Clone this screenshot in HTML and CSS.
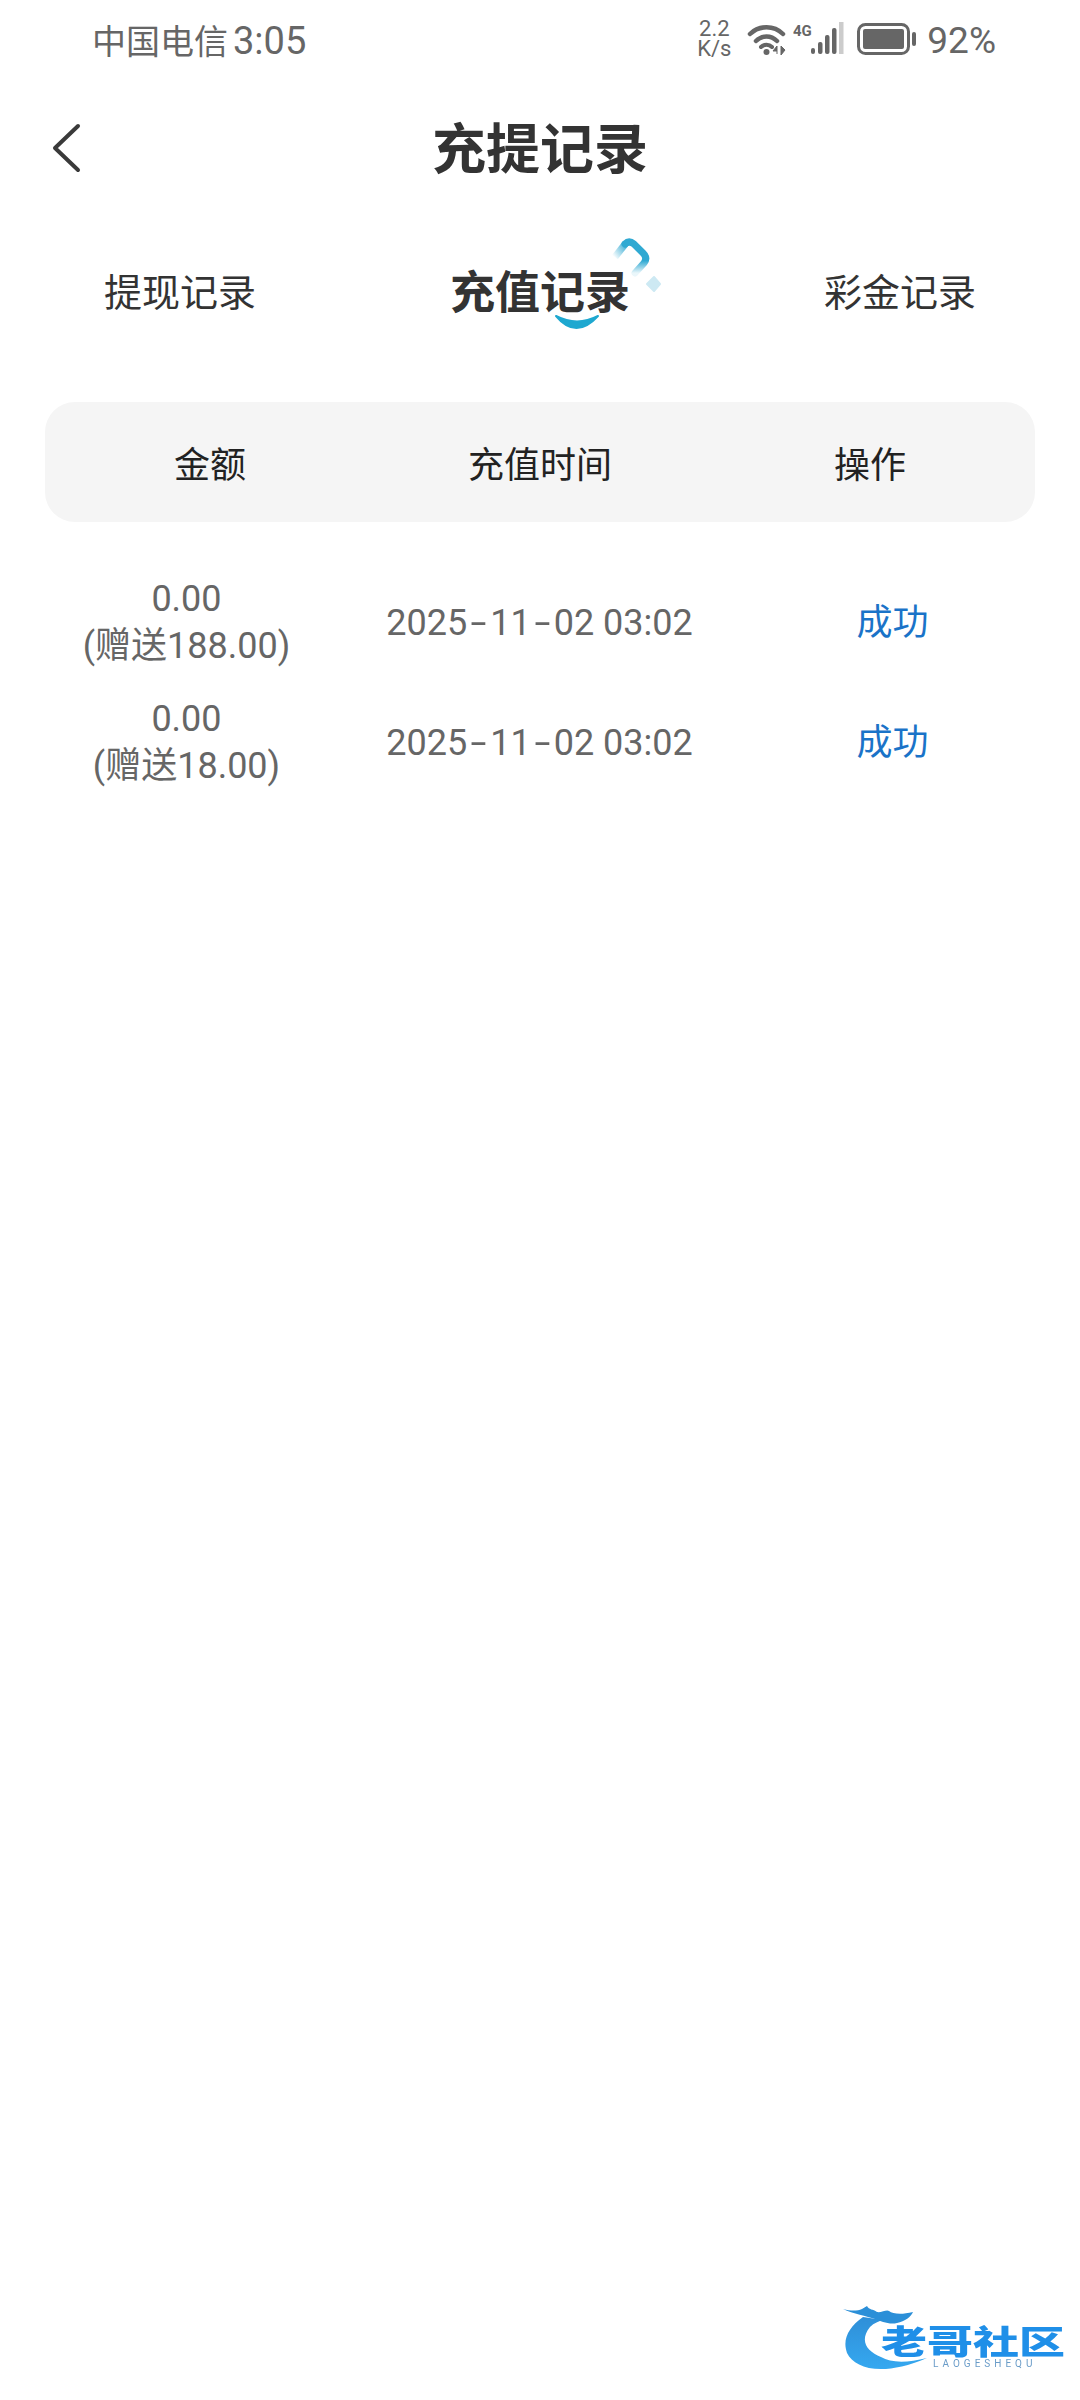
FILE: index.html
```html
<!DOCTYPE html>
<html>
    <head>
        <meta charset="utf-8" />
        <title>充提记录</title>
        <link rel="stylesheet" href="styles.css">
    </head>
    <body>
        <div class="page">
            <!--状态栏-->
            <div class="status_bar">
                <div class="status_left">中国电信<span class="status_time">3:05</span></div>
                <div class="status_right">
                    <div class="net_speed">2.2<br>K/s</div>
                    <svg class="ico_wifi" width="40" height="34" viewBox="0 0 40 34">
                        <path d="M3 12 C12 3 27 3 36 12" fill="none" stroke="#666" stroke-width="4.5" stroke-linecap="round"/>
                        <path d="M9 19 C15 13 24 13 30 19" fill="none" stroke="#666" stroke-width="4.5" stroke-linecap="round"/>
                        <path d="M14 25 C17 22 22 22 25 25" fill="none" stroke="#666" stroke-width="4" stroke-linecap="round"/>
                        <circle cx="19.500" cy="30" r="3" fill="#666"/>
                        <path d="M30 32 V24 L26 29 H30 M34 24 V33 L38 28 Z" fill="#666" stroke="#666" stroke-width="1"/>
                    </svg>
                    <svg class="ico_signal" width="52" height="34" viewBox="0 0 52 34">
                        <text x="0" y="14" class="txt_4g">4G</text>
                        <rect x="18" y="26" width="4" height="6" rx="2" fill="#666"/>
                        <rect x="25" y="20" width="4.500" height="12" rx="2" fill="#666"/>
                        <rect x="32" y="13" width="4.500" height="19" rx="2" fill="#666"/>
                        <rect x="39" y="6" width="4.500" height="26" rx="2" fill="#666"/>
                        <rect x="46" y="0" width="4.500" height="32" fill="#ccc"/>
                    </svg>
                    <svg class="ico_battery" width="60" height="32" viewBox="0 0 60 32">
                        <rect x="1.500" y="1.500" width="50" height="29" rx="7" fill="none" stroke="#666" stroke-width="3"/>
                        <rect x="6" y="6" width="41" height="20" rx="2" fill="#666"/>
                        <rect x="55" y="9" width="4" height="14" rx="2" fill="#666"/>
                    </svg>
                    <div class="battery_num">92%</div>
                </div>
            </div>

            <!--标题-->
            <div class="nav_bar">
                <svg class="ico_back" width="30" height="50" viewBox="0 0 30 50">
                    <path d="M27 3 L4 25 L27 47" fill="none" stroke="#3a3a3a" stroke-width="4" stroke-linecap="round" stroke-linejoin="round"/>
                </svg>
                <h1>充提记录</h1>
            </div>

            <!--切换-->
            <div class="tabs">
                <div class="tab">提现记录</div>
                <div class="tab tab_on">
                    <span class="tab_txt">充值记录</span>
                    <svg class="tab_deco" width="130" height="100" viewBox="0 0 130 100">
                        <defs>
                            <linearGradient id="arc" x1="0" y1="0" x2="0" y2="1">
                                <stop offset="0" stop-color="#2fa9d2"/>
                                <stop offset="0.600" stop-color="#2fa9d2"/>
                                <stop offset="1" stop-color="#2fa9d2" stop-opacity="0.100"/>
                            </linearGradient>
                            <linearGradient id="arc2" x1="1" y1="0" x2="0" y2="1">
                                <stop offset="0" stop-color="#2fa9d2"/>
                                <stop offset="1" stop-color="#2fa9d2" stop-opacity="0.050"/>
                            </linearGradient>
                        </defs>
                        <path d="M86 8 Q90 4 95 8 L104 17 Q109 22 105 27 L96 37" fill="none" stroke="url(#arc)" stroke-width="7" stroke-linecap="round"/>
                        <path d="M87 7 L76 21" fill="none" stroke="url(#arc2)" stroke-width="7"/>
                        <path d="M115 41 L121 48 L115 55 L108 48 Z" fill="#cde9f3" stroke="#cde9f3" stroke-width="2" stroke-linejoin="round"/>
                        <path d="M17 80 Q37 104 59 80 Q38 91 17 80 Z" fill="#1ea8d0" stroke="#1ea8d0" stroke-width="2" stroke-linejoin="round"/>
                    </svg>
                </div>
                <div class="tab">彩金记录</div>
            </div>

            <!--表头-->
            <div class="tb_head">
                <div>金额</div>
                <div>充值时间</div>
                <div>操作</div>
            </div>

            <!--列表-->
            <div class="tb_row">
                <div>0.00<br>(赠送188.00)</div>
                <div>2025<span class="dash">-</span>11<span class="dash">-</span>02 03:02</div>
                <div class="st_ok">成功</div>
            </div>
            <div class="tb_row">
                <div>0.00<br>(赠送18.00)</div>
                <div>2025<span class="dash">-</span>11<span class="dash">-</span>02 03:02</div>
                <div class="st_ok">成功</div>
            </div>

            <!--水印-->
            <div class="logo">
                <svg class="logo_dragon" width="130" height="72" viewBox="0 0 130 72">
                    <defs>
                        <linearGradient id="dragon" x1="0" y1="0" x2="0" y2="1">
                            <stop offset="0" stop-color="#2f8fd8"/>
                            <stop offset="1" stop-color="#35a8f0"/>
                        </linearGradient>
                    </defs>
                    <path d="M20 14 C6 24 -1 36 4 50 C12 66 40 74 84 55 C64 60 48 60 38 54 C24 48 16 38 27 24 C31 20 36 18 40 17 Z" fill="url(#dragon)"/>
                    <path d="M0 6 C8 8 14 8 19 6 L24 3 C26 7 30 6 34 9 C38 10 44 6 46 8 C50 11 58 12 70 9 C68 14 62 18 54 20 C46 22 38 18 32 16 C24 13 10 11 0 6 Z" fill="#2b8fd8"/>
                </svg>
                <div class="logo_name">老哥社区</div>
                <div class="logo_en">LAOGESHEQU</div>
            </div>
        </div>
    </body>
</html>
```

FILE: styles.css
```css
html,body{
    margin:0;
    padding:0;
    background:#fff;
}
.page{
    position:relative;
    width:1080px;
    height:2400px;
    overflow:hidden;
    font-family:Roboto,"Noto Sans CJK SC",sans-serif;
}
/*状态栏*/
.status_bar{
    height:78px;
    display:flex;
    justify-content:space-between;
    align-items:center;
    padding:0 84px 0 92px;
    color:#666;
    font-size:34px;
}
.status_time{
    margin-left:5px;
    font-size:38px;
}
.status_right{
    display:flex;
    align-items:center;
}
.net_speed{
    width:52px;
    margin-right:7px;
    font-size:22px;
    line-height:20px;
    text-align:center;
}
.ico_wifi{
    margin-right:6px;
}
.ico_signal{
    margin-right:12px;
}
.txt_4g{
    font-size:15px;
    font-weight:bold;
    fill:#666;
}
.ico_battery{
    margin-right:10px;
}
.battery_num{
    padding-top:3px;
    font-size:37px;
}
/*标题*/
.nav_bar{
    height:140px;
    box-sizing:border-box;
    padding-bottom:6px;
    display:flex;
    align-items:center;
    justify-content:center;
    position:relative;
}
.nav_bar h1{
    margin:0;
    font-size:54px;
    font-weight:bold;
    color:#333;
}
.ico_back{
    position:absolute;
    left:51px;
    top:45px;
}
/*切换*/
.tabs{
    height:184px;
    box-sizing:border-box;
    padding-bottom:42px;
    display:flex;
    align-items:center;
}
.tab{
    width:360px;
    text-align:center;
    font-size:38px;
    color:#333;
}
.tab_on{
    position:relative;
    font-size:45px;
    font-weight:bold;
}
.tab_deco{
    position:absolute;
    left:179px;
    top:-21px;
}
/*表格*/
.tb_head{
    margin:0 45px;
    height:120px;
    background:#f5f5f5;
    border-radius:30px;
    display:grid;
    grid-template-columns:repeat(3,1fr);
    align-items:center;
    text-align:center;
    font-size:36px;
    color:#222;
}
.tb_row{
    margin-left:10px;
    width:1059px;
    height:120px;
    display:grid;
    grid-template-columns:repeat(3,1fr);
    align-items:center;
    text-align:center;
    font-size:36px;
    line-height:47px;
    color:#666;
}
.tb_head + .tb_row{
    margin-top:41px;
}
/*日期里的短横比普通连字符宽*/
.dash{
    display:inline-block;
    width:23px;
    transform:scaleX(1.6);
}
.st_ok{
    color:#1a73c8;
}
/*水印*/
.logo{
    position:absolute;
    left:843px;
    top:2303px;
    width:225px;
    height:72px;
    filter:blur(0.6px);
}
.logo_dragon{
    position:absolute;
    left:0;
    top:0;
}
.logo_name{
    position:absolute;
    left:38px;
    top:12px;
    font-size:46px;
    line-height:54px;
    font-weight:900;
    color:#1f8fe8;
    white-space:nowrap;
    transform:scaleY(0.72);
}
.logo_en{
    position:absolute;
    left:90px;
    top:55px;
    font-size:10px;
    line-height:12px;
    letter-spacing:4px;
    color:#6a9cc8;
    white-space:nowrap;
}
```
